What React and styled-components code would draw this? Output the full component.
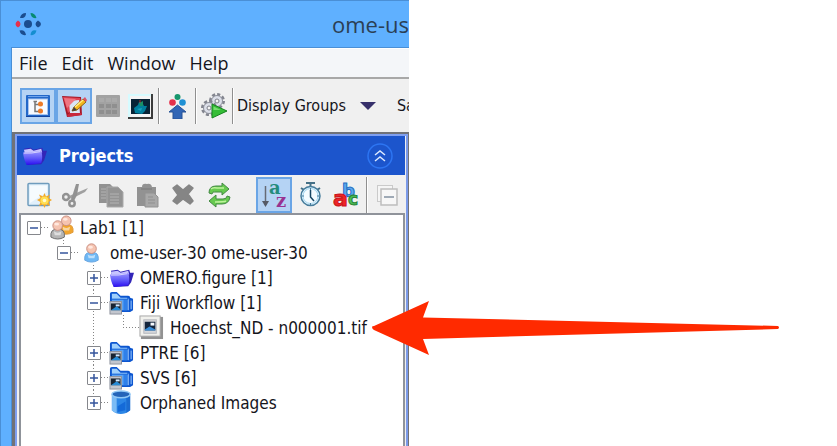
import React, { useState } from "react";
import styled, { createGlobalStyle } from "styled-components";

const GlobalStyle = createGlobalStyle`
  * { box-sizing: border-box; }
  body { margin: 0; background: #fff; overflow: hidden; }
  button { font: inherit; color: inherit; margin: 0; padding: 0; border: 0; background: none; }
  svg { display: block; flex: none; }
`;

const uiFont = `"Open Sans", "Noto Sans", sans-serif`;
const treeFont = `"DejaVu Sans Condensed", "Noto Sans", sans-serif`;

const Page = styled.div`
  display: grid;
  grid-template-columns: minmax(0, 409fr) minmax(0, 428fr);
  min-height: 100vh;
  color: #15151c;
`;

const AppWindow = styled.main`
  display: flex;
  flex-direction: column;
  min-width: 0;
  border-top: 1px solid #4a8fd6;
  border-left: 1px solid #4a8fd6;
  background: #5fb0ff;
`;

const TitleBar = styled.header`
  display: flex;
  align-items: center;
  height: 46px;
  padding-left: 14px;
  overflow: hidden;
  font: 22px/28px ${uiFont};
  white-space: nowrap;
  color: #2b3f55;
`;

const WindowTitle = styled.h1`
  margin: 0 0 0 auto;
  flex: 0 0 76px;
  font: inherit;
`;

const Client = styled.div`
  display: flex;
  flex-direction: column;
  flex: 1;
  margin-left: 10px;
  border-top: 1px solid #4a8fd6;
  border-left: 1px solid #4a8fd6;
  background: #f0f0f0;
`;

const MenuBar = styled.nav`
  display: flex;
  align-items: center;
  gap: 14px;
  height: 31px;
  padding-left: 7px;
  background: #f4f6f9;
  border-top: 1px solid #fff;
  border-bottom: 2px solid #a8a8a8;
  font: 18px/24px ${uiFont};
`;

const Toolbar = styled.div`
  display: flex;
  align-items: center;
  height: 53px;
  padding-left: 8px;
  overflow: hidden;
  white-space: nowrap;
  font: 16px/24px ${treeFont};
`;

const ToolButton = styled.button`
  display: flex;
  flex: none;
  align-items: center;
  justify-content: center;
  width: ${(p) => p.$width || 36}px;
  height: 36px;
  border: 2px solid ${(p) => (p["aria-pressed"] ? "#6aa5e6" : "transparent")};
  background: ${(p) => (p["aria-pressed"] ? "#b5d3f4" : "transparent")};
`;

const Separator = styled.span`
  flex: none;
  width: 2px;
  height: 36px;
  border-left: 1px solid #8f8f8f;
  border-right: 1px solid #fff;
  margin: 0 1px 0 2px;
`;

const GroupsButton = styled.button`
  display: flex;
  align-items: center;
  gap: 14px;
  margin: 0 21px 0 2px;
`;

const Panel = styled.section`
  display: flex;
  flex-direction: column;
  flex: 1;
  min-width: 0;
  border: solid #707278;
  border-width: 2px 1px 0 3px;
  box-shadow: inset 2px 2px #7f9ff0, inset -2px 0 #7b9ae8;
  padding: 2px 3px 0 2px;
`;

const PanelHeader = styled.header`
  display: flex;
  align-items: center;
  height: 39px;
  padding: 0 12px 0 5px;
  background: #1c55cc;
  color: #fff;
`;

const PanelTitle = styled.h2`
  flex: 1;
  margin: 0 0 0 12px;
  font: bold 18px/24px ${treeFont};
`;

const PanelTools = styled.div`
  display: flex;
  align-items: center;
  height: 38px;
  padding: 2px 0 0 4px;
`;

const ToolGap = styled.span`
  flex: 1;
  max-width: 19px;
`;

const TreePane = styled.div`
  flex: 1;
  margin-left: 2px;
  border: 2px solid #8f939a;
  border-bottom: 0;
  background: #fff;
`;

const Branch = styled.ul`
  list-style: none;
  margin: 0;
  padding: 0 0 0 ${(p) => (p.$root ? 0 : 30)}px;
`;

const Node = styled.li`
  position: relative;

  &::before {
    content: "";
    display: ${(p) => (p.$root ? "none" : "block")};
    position: absolute;
    left: 12px;
    top: 0;
    bottom: 0;
    width: 1px;
    background: repeating-linear-gradient(#858585 0 1px, transparent 1px 3px);
  }

  &:last-child::before {
    height: 12px;
    bottom: auto;
  }
`;

const Row = styled.div`
  position: relative;
  display: flex;
  align-items: center;
  width: max-content;
  height: 25px;
  padding-left: ${(p) => (p.$leaf ? 12 : 6)}px;
  font: 17px/24px ${treeFont};
  white-space: nowrap;
`;

const Expander = styled.button`
  width: 14px;
  height: 14px;
  border: 1px solid #85878c;
  border-radius: 1px;
  background: #fff;
`;

const Dots = styled.span`
  width: ${(p) => (p.$leaf ? 16 : 8)}px;
  height: 1px;
  background: repeating-linear-gradient(90deg, #858585 0 1px, transparent 1px 3px);
`;

const NodeIcon = styled.span`
  width: 25px;
  height: 25px;
  margin-right: 6px;
`;

const Pointer = styled.div`
  position: absolute;
  top: 50%;
  left: 100%;
  transform: translateY(-50%);
  padding-left: 5px;
  pointer-events: none;
  z-index: 2;
`;

const Svg = ({ size = 26, children }) => (
  <svg width={size} height={size} viewBox="0 0 26 26" aria-hidden="true">{children}</svg>
);

const Logo = () => (
  <Svg>
    <circle cx="13" cy="13" r="4" fill="#1b4d8f" />
    <path d="M3 9.500Q5.500 10.500 5.500 13T3 16.500Q.5 15 .5 13T3 9.500Z" fill="#e8304c" />
    <path d="M23 9.500Q20.500 11 20.500 13T23 16.500Q26 15 26 13T23 9.500Z" fill="#1b4d8f" />
    <path d="M5 7Q6 2 11 2Q11 6 8 7Z" fill="#1b4d8f" />
    <path d="M15.500 2Q20 2 21.500 7Q16 8 15.500 2Z" fill="#078a72" />
    <path d="M4.500 19.500Q10 18 11 24Q6 25 4.500 19.500Z" fill="#1b4d8f" />
    <path d="M21.500 19.500Q16 18 15.500 24Q20 25 21.500 19.500Z" fill="#148ed0" />
  </Svg>
);

const TreeViewIcon = () => (
  <Svg>
    <rect x="1" y="2" width="24" height="22" rx="1" fill="#2368c9" />
    <path d="M1 23.500H25" stroke="#1244a0" />
    <rect x="3.500" y="6" width="19" height="15.500" fill="#f7faff" stroke="#a9c6f0" />
    <path d="M3 3.500H23" stroke="#6ea3ec" />
    <path d="M8.500 8.500H12M10 8V18.500H14M10 11.500H14" stroke="#777" fill="none" strokeWidth="1.500" />
    <circle cx="15.500" cy="11" r="2.500" fill="#ed7b28" />
    <circle cx="15.500" cy="18" r="2.500" fill="#ed7b28" />
  </Svg>
);

const NotepadIcon = () => (
  <Svg>
    <path d="M1 3L20 4L21 22L6 24Z" fill="#a51828" />
    <path d="M2 4L19 5L20 8L13 15L7 20Z" fill="#e04454" />
    <path d="M8 8L18 7L19 21L9 21Z" fill="#d9e5f6" />
    <path d="M3 5L15 6L6 15Z" fill="#ef7582" />
    <path d="M6 22L9 20L20 20L21 22L7 24Z" fill="#c9283c" />
    <path d="M11 18L13 14L22 6L25 9L16 17Z" fill="#f2b51d" stroke="#8f6518" />
    <path d="M14 14L22 7" stroke="#ffed81" strokeWidth="1.500" />
    <path d="M11 18L13 14L16 17Z" fill="#453f3a" />
    <path d="M22 6L24 4L26 7L25 9Z" fill="#db5364" />
  </Svg>
);

const GridIcon = () => (
  <Svg>
    <rect x="1" y="2" width="24" height="22" rx="1" fill="#a2a2a2" />
    {[5, 11, 17].map((y) => [4, 11, 17].map((x) => (
      <rect key={`${x}-${y}`} x={x} y={y} width="5" height="4" fill={y === 5 ? "#aaa" : "#8f8f8f"} />
    )))}
  </Svg>
);

const ThumbIcon = () => (
  <Svg>
    <rect x="1" y="1" width="25" height="25" fill="#3c3c3c" />
    <rect x="1" y="1" width="23" height="23" fill="#d6fbff" />
    <rect x="3" y="3" width="21" height="21" fill="#f5f5f5" />
    <rect x="4" y="6" width="19" height="15" fill="#082336" />
    <path d="M8 20L7 15L11 12L12 9L15 9L17 13L20 13L18 18L15 21Z" fill="#007f9e" />
    <path d="M12 10L16 8L16 13L13 13Z" fill="#189068" />
    <path d="M10 16L15 15L14 18Z" fill="#18a1bc" />
    <path d="M13 7V10" stroke="#a33" />
  </Svg>
);

const UploadIcon = () => (
  <Svg>
    <circle cx="13.500" cy="4" r="3" fill="#17966c" />
    <circle cx="8.500" cy="9.500" r="3.300" fill="#e5304b" />
    <circle cx="18.500" cy="9.500" r="3.300" fill="#2090d4" />
    <path d="M13.500 12L22 19H18V26H9V19H5Z" fill="#3165b5" stroke="#275396" />
  </Svg>
);

const GearShape = ({ x, y }) => (
  <g transform={`translate(${x} ${y})`}>
    <circle r="6.500" fill="none" stroke="#83858f" strokeWidth="3" strokeDasharray="3 2" />
    <circle r="5.500" fill="#dcdfe9" stroke="#8c8f9a" />
    <circle r="2" fill="#f5f5f5" stroke="#7d808a" />
  </g>
);

const GearsIcon = () => (
  <Svg>
    <GearShape x={16} y={8} />
    <GearShape x={8} y={15} />
    <path d="M11 11L26 18L11 25Z" fill="#35bd36" stroke="#16841f" />
    <path d="M12.500 13.500L20 17H12.500Z" fill="#78dd70" />
  </Svg>
);

const FolderIcon = ({ size }) => (
  <Svg size={size}>
    <defs>
      <linearGradient id="folderFront" x2="0" y2="1">
        <stop offset="0" stopColor="#9c96ff" />
        <stop offset=".5" stopColor="#625cfa" />
        <stop offset="1" stopColor="#2a0bf0" />
      </linearGradient>
    </defs>
    <path d="M2 6L9 5L12 7L21 5L22 8L26 8L23 18L20 22L5 23Z" fill="#3225b8" />
    <path d="M2 7L9 6L12 8L20 6L21 10L3 11Z" fill="#c7c4ff" />
    <path d="M1 10Q10 10 20 8Q22 14 20 21Q12 22 5 23Q2 18 1 10Z" fill="url(#folderFront)" />
    <path d="M2 10.500Q10 11 19 9" fill="none" stroke="#d8d6ff" />
  </Svg>
);

const NewIcon = () => (
  <Svg>
    <rect x="2" y="1.500" width="21" height="22" rx="1" fill="#e1f0fb" stroke="#6f9cbd" strokeWidth="1.500" />
    <path d="M4 3.500H21V10L4 21Z" fill="#fff" opacity=".7" />
    <path d="M18.500 11L20 14.500L24 12.500L22.500 16L26 18L22.500 20L24 24L20 22.500L18.500 26L17 22.500L13 24L14.500 20L11 18L14.500 16L13 12.500L17 14.500Z" fill="#f4a926" />
    <circle cx="18.500" cy="18.500" r="4" fill="#ffdf52" />
    <circle cx="18.500" cy="18.500" r="1.800" fill="#fffbd0" />
  </Svg>
);

const CutIcon = () => (
  <Svg>
    <circle cx="4" cy="15" r="3" fill="none" stroke="#929292" strokeWidth="2.500" />
    <circle cx="10" cy="21.500" r="2.700" fill="none" stroke="#929292" strokeWidth="2.500" />
    <path d="M7 14L26 6L23 10L9 17Z" fill="#a0a0a0" />
    <path d="M9 18L14 2H17L15 13L12 19Z" fill="#929292" />
  </Svg>
);

const CopyIcon = () => (
  <Svg>
    <path d="M1 2H12L16 6V21H1Z" fill="#929292" />
    <path d="M9 5H20L25 10V25H9Z" fill="#949494" stroke="#aaa" />
    <path d="M3 7H8M3 10H8M3 13H8M3 16H8M12 12H21M12 15H21M12 18H21M12 21H21" stroke="#b3b3b3" />
  </Svg>
);

const PasteIcon = () => (
  <Svg>
    <path d="M3 5H8Q8 1 13 2Q17 1 18 5H22V24H3Z" fill="#929292" />
    <path d="M7 7H18" stroke="#858585" strokeWidth="2" />
    <path d="M11 11H20L24 15V25H11Z" fill="#a8a8a8" stroke="#929292" />
    <path d="M14 15H19M14 18H21M14 21H21" stroke="#8f8f8f" />
  </Svg>
);

const DeleteIcon = () => (
  <Svg>
    <path d="M3 6L7 3L13 8L19 3L23 6L18 12L23 19L20 22L13 17L7 22L3 19L8 13Z" fill="#858585" stroke="#858585" strokeWidth="1.500" strokeLinejoin="round" />
  </Svg>
);

const RefreshIcon = () => (
  <Svg>
    <path d="M3 11Q3 4 10 4H16V1L23 7L16 13V10H10Q6 9 6 12Z" fill="#66c94f" stroke="#438a43" />
    <path d="M24 15Q23 22 16 22H10V25L3 19L10 13V17H17Q21 17 21 14Z" fill="#66c94f" stroke="#438a43" />
    <path d="M5 7Q7 5 11 6H18M20 19Q18 20 9 20" fill="none" stroke="#bef29c" strokeWidth="1.500" />
  </Svg>
);

const Glyph = styled.text`
  font: bold ${(p) => p.$size}px "DejaVu Serif", serif;
  fill: ${(p) => p.$color};
`;

const SortIcon = () => (
  <Svg>
    <path d="M4.500 4V23" stroke="#666a75" strokeWidth="1.500" />
    <path d="M1 19H8L4.500 25Z" fill="#555a66" />
    <Glyph x="8" y="12" $size={18} $color="#258b7b">a</Glyph>
    <Glyph x="15" y="25" $size={18} $color="#983391">z</Glyph>
  </Svg>
);

const ClockIcon = () => (
  <Svg>
    <path d="M9 1H18M13.500 1V5M4 6L7 8M23 6L20 8" stroke="#457086" strokeWidth="2" />
    <circle cx="13.500" cy="14" r="9.500" fill="#ddf2fd" stroke="#467c9b" strokeWidth="1.500" />
    <circle cx="13.500" cy="14" r="7.500" fill="#f4fbff" stroke="#a5d6f0" />
    <path d="M13.500 8V15L17 19" fill="none" stroke="#174663" strokeWidth="1.500" />
    <path d="M13.500 6V8M20 14H22M13.500 21V23M5 14H7" stroke="#497d9c" />
  </Svg>
);

const AbcGlyph = styled.text`
  font: 900 ${(p) => p.$size}px "DejaVu Sans", sans-serif;
  fill: ${(p) => p.$color};
  stroke: ${(p) => p.$edge};
  stroke-width: 1px;
`;

const AbcIcon = () => (
  <Svg>
    <AbcGlyph x="9" y="15" $size={18} $color="#5ca9f0" $edge="#256dc2">b</AbcGlyph>
    <AbcGlyph x="0" y="24" $size={22} $color="#ef2525" $edge="#c9131c">a</AbcGlyph>
    <AbcGlyph x="15" y="23" $size={17} $color="#4dbd54" $edge="#268237">c</AbcGlyph>
  </Svg>
);

const CollapseIcon = () => (
  <Svg>
    <rect x="3.500" y="3.500" width="15" height="16" fill="#f5f5f5" stroke="#cacaca" />
    <rect x="7" y="7" width="16" height="16" fill="#f7f7f7" stroke="#bdbdbd" strokeWidth="1.500" />
    <path d="M10 15H20" stroke="#8290a0" strokeWidth="1.500" />
  </Svg>
);

const ChevronIcon = () => (
  <Svg>
    <circle cx="13" cy="13" r="12" fill="none" stroke="#2d75f2" strokeWidth="1.500" />
    <path d="M8 12L13 8L18 12M8 18L13 14L18 18" fill="none" stroke="#dce9ff" strokeWidth="1.500" />
  </Svg>
);

const Person = ({ x = 0, y = 0, fill, edge }) => (
  <g transform={`translate(${x} ${y})`}>
    <path d="M1 18Q0 9 8 10Q16 9 15 18Q8 22 1 18Z" fill={fill} stroke={edge} />
    <path d="M4 12Q8 15 12 12L11 16H5Z" fill="#fff" opacity=".55" />
    <circle cx="8" cy="6" r="5" fill="#f5c4b1" stroke="#c98f82" />
    <ellipse cx="7" cy="4.500" rx="2.500" ry="1.500" fill="#ffe8df" />
  </g>
);

const GroupIcon = () => (
  <Svg size={25}>
    <Person x={10} y={0} fill="#f1a52d" edge="#e09a3c" />
    <Person x={1} y={5} fill="#b5b5b5" edge="#6a6a6a" />
  </Svg>
);

const UserIcon = () => (
  <Svg size={25}><Person x={5} y={3} fill="#6eb8f5" edge="#6aa5e0" /></Svg>
);

const DatasetIcon = () => (
  <Svg size={25}>
    <path d="M1 22V4Q1 2 3 2H8L12 6H20Q22 6 22 8L25 9V21L22 23H10Z" fill="#0d56d0" />
    <path d="M3 8V4H8L12 8H19V10H3Z" fill="#9fd0fc" />
    <path d="M3 10H19V21H3Z" fill="#5aa4f5" />
    <path d="M15 10H19V21H15Z" fill="#2f80ea" />
    <path d="M20 9V21M23 11V20" stroke="#a5d2ff" />
    <path d="M2 9.500H20" stroke="#1463d8" />
    <rect x="1" y="12" width="12" height="13" fill="#c3c6ce" stroke="#8f929c" />
    <rect x="2" y="14" width="10" height="7" fill="#182330" />
    <path d="M2 21L8 17L12 20V21Z" fill="#278bd6" />
    <rect x="7" y="15" width="4" height="2" fill="#d5eaff" />
  </Svg>
);

const ImageIcon = () => (
  <Svg size={25}>
    <rect x="2" y="2" width="23" height="23" fill="#929292" />
    <rect x="1" y="1" width="21" height="21" fill="#f1f1ed" stroke="#a5a5a5" />
    <rect x="5" y="5" width="13" height="14" fill="#d6d7da" stroke="#b5b7bd" />
    <rect x="6" y="7" width="11" height="9" fill="#14253c" />
    <path d="M6 15L11 12L17 15V16H6Z" fill="#398ed9" />
    <rect x="12" y="8" width="4" height="3" fill="#f5faff" />
  </Svg>
);

const OrphanIcon = () => (
  <Svg size={25}>
    <path d="M3 4V21Q12 29 22 21V4Z" fill="#2c86e6" />
    <path d="M3 5H8V24Q4 23 3 21Z" fill="#7cbcf5" />
    <path d="M18 6H22V21L18 24Z" fill="#1b6bd0" />
    <ellipse cx="12.500" cy="4.500" rx="9.500" ry="3.500" fill="#2464b9" stroke="#91c8f5" strokeWidth="1.500" />
    <path d="M9 17L17 12V21L9 23Z" fill="#0f63d4" opacity=".8" />
  </Svg>
);

const Arrow = () => (
  <svg width="408" height="54" viewBox="0 0 408 54" aria-hidden="true">
    <path d="M0 26Q0 25 2 25L57 0L51 16.500L406 25Q408 26.500 406 28L51 38L57 54L2 29Q0 28 0 26Z" fill="#ff2a00" />
  </svg>
);

const ExpanderMark = ({ open }) => (
  <svg width="12" height="12" viewBox="0 0 12 12" aria-hidden="true">
    <path d={open ? "M2 6H10" : "M2 6H10M6 2V10"} stroke="#35549c" strokeWidth="1.500" />
  </svg>
);

const projects = {
  label: "Lab1 [1]",
  icon: <GroupIcon />,
  children: [
    {
      label: "ome-user-30 ome-user-30",
      icon: <UserIcon />,
      children: [
        { label: "OMERO.figure [1]", icon: <FolderIcon size={25} />, children: [] },
        {
          label: "Fiji Workflow [1]",
          icon: <DatasetIcon />,
          children: [{ label: "Hoechst_ND - n000001.tif", icon: <ImageIcon />, marked: true }],
        },
        { label: "PTRE [6]", icon: <DatasetIcon />, children: [] },
        { label: "SVS [6]", icon: <DatasetIcon />, children: [] },
        { label: "Orphaned Images", icon: <OrphanIcon />, children: [] },
      ],
    },
  ],
};

function TreeNode({ node, root }) {
  const leaf = !node.children;
  const [open, setOpen] = useState(!leaf && node.children.length > 0);
  return (
    <Node $root={root} role="treeitem" aria-expanded={leaf ? undefined : open}>
      <Row $leaf={leaf}>
        {!leaf && (
          <Expander aria-label={`Toggle ${node.label}`} onClick={() => setOpen(!open)}>
            <ExpanderMark open={open} />
          </Expander>
        )}
        <Dots $leaf={leaf} />
        <NodeIcon>{node.icon}</NodeIcon>
        <span>{node.label}</span>
        {node.marked && <Pointer><Arrow /></Pointer>}
      </Row>
      {open && node.children.length > 0 && (
        <Branch role="group">
          {node.children.map((child) => <TreeNode key={child.label} node={child} />)}
        </Branch>
      )}
    </Node>
  );
}

const editTools = [
  ["New", NewIcon], ["Cut", CutIcon], ["Copy", CopyIcon],
  ["Paste", PasteIcon], ["Delete", DeleteIcon], ["Refresh", RefreshIcon],
];

export default function App() {
  return (
    <Page>
      <GlobalStyle />
      <AppWindow>
        <TitleBar>
          <Logo />
          <WindowTitle>ome-us</WindowTitle>
        </TitleBar>
        <Client>
          <MenuBar>
            {["File", "Edit", "Window", "Help"].map((name) => <button key={name}>{name}</button>)}
          </MenuBar>
          <Toolbar>
            <ToolButton aria-label="Tree view" aria-pressed={true}><TreeViewIcon /></ToolButton>
            <ToolButton aria-label="Annotations" aria-pressed={true}><NotepadIcon /></ToolButton>
            <ToolButton $width={32} aria-label="Grid"><GridIcon /></ToolButton>
            <ToolButton $width={32} aria-label="Viewer"><ThumbIcon /></ToolButton>
            <Separator />
            <ToolButton $width={32} aria-label="Import"><UploadIcon /></ToolButton>
            <Separator />
            <ToolButton $width={32} aria-label="Run script"><GearsIcon /></ToolButton>
            <Separator />
            <GroupsButton>
              Display Groups
              <svg width="16" height="8" viewBox="0 0 16 8" aria-hidden="true"><path d="M0 0H16L8 8Z" fill="#37306b" /></svg>
            </GroupsButton>
            <span>Sa</span>
          </Toolbar>
          <Panel>
            <PanelHeader>
              <FolderIcon size={25} />
              <PanelTitle>Projects</PanelTitle>
              <button aria-label="Collapse panel"><ChevronIcon /></button>
            </PanelHeader>
            <PanelTools>
              {editTools.map(([name, Icon]) => (
                <ToolButton key={name} aria-label={name}><Icon /></ToolButton>
              ))}
              <ToolGap />
              <ToolButton aria-label="Sort by name" aria-pressed={true}><SortIcon /></ToolButton>
              <ToolButton aria-label="Sort by date"><ClockIcon /></ToolButton>
              <ToolButton aria-label="Show names"><AbcIcon /></ToolButton>
              <Separator />
              <ToolButton aria-label="Collapse all"><CollapseIcon /></ToolButton>
            </PanelTools>
            <TreePane>
              <Branch $root role="tree"><TreeNode node={projects} root /></Branch>
            </TreePane>
          </Panel>
        </Client>
      </AppWindow>
    </Page>
  );
}
